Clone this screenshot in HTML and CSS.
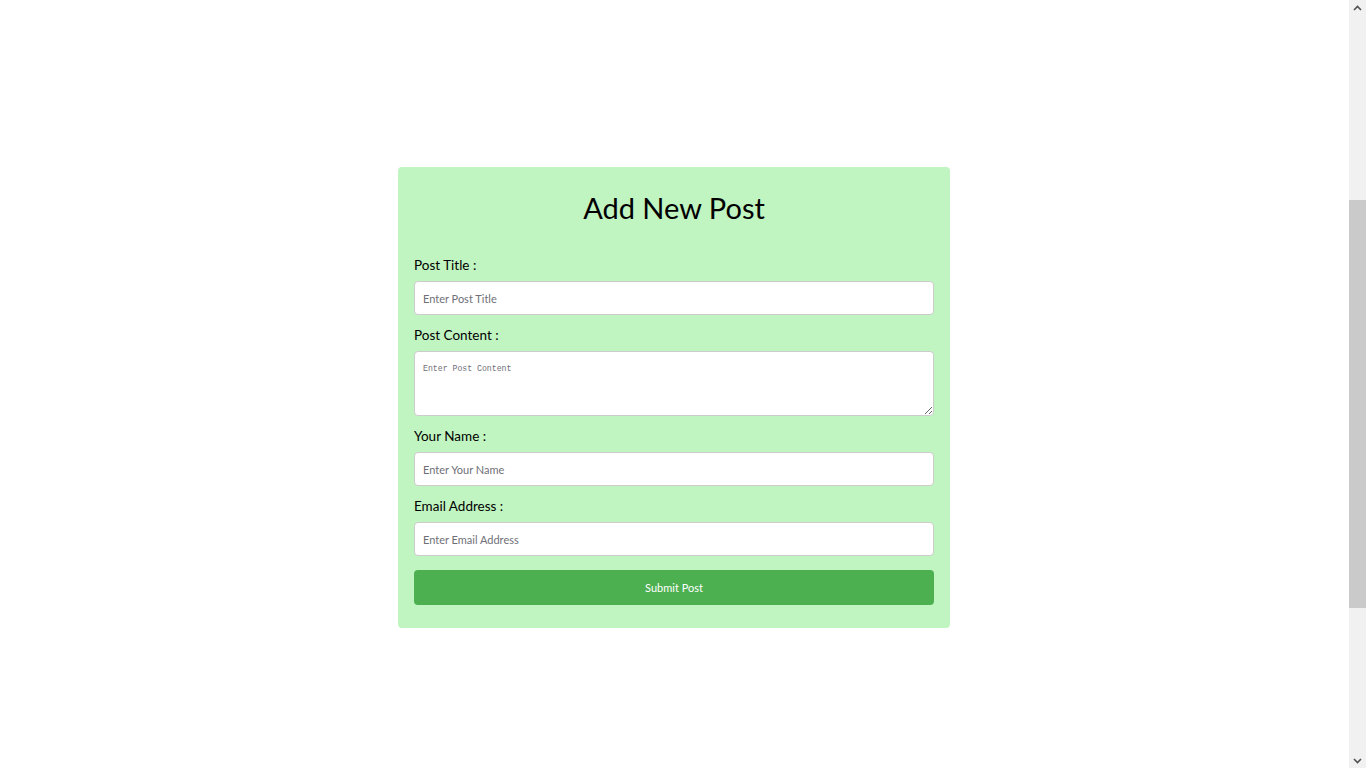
FILE: index.html
```html
<!DOCTYPE html>
<html lang="en">
<head>
<meta charset="utf-8">
<title>Add New Post</title>
<link rel="stylesheet" href="styles.css">
</head>
<body>
<main class="page">
  <form class="post-card">
    <h2 class="post-card__title">Add New Post</h2>
    <label class="field-label" for="title">Post Title :</label>
    <input class="field-input" id="title" type="text" placeholder="Enter Post Title">
    <label class="field-label" for="content">Post Content :</label>
    <textarea class="field-textarea" id="content" placeholder="Enter Post Content"></textarea>
    <label class="field-label" for="name">Your Name :</label>
    <input class="field-input" id="name" type="text" placeholder="Enter Your Name">
    <label class="field-label" for="email">Email Address :</label>
    <input class="field-input" id="email" type="email" placeholder="Enter Email Address">
    <button class="submit-btn" type="button">Submit Post</button>
  </form>
</main>
<div class="scrollbar" aria-hidden="true">
  <div class="scrollbar__btn">
    <svg width="9" height="6" viewBox="0 0 9 6"><path d="M1 5 L4.5 1.5 L8 5" fill="none" stroke="#505050" stroke-width="1.6"/></svg>
  </div>
  <div class="scrollbar__track"><div class="scrollbar__thumb"></div></div>
  <div class="scrollbar__btn">
    <svg width="9" height="6" viewBox="0 0 9 6"><path d="M1 1 L4.5 4.5 L8 1" fill="none" stroke="#505050" stroke-width="1.6"/></svg>
  </div>
</div>
<script src="app.js"></script>
</body>
</html>
```
FILE: styles.css
```css
html, body {
  margin: 0;
  padding: 0;
  background: #ffffff;
}
body {
  font-family: "Lato", "Open Sans", sans-serif;
  color: #000;
}
.page {
  display: flex;
  justify-content: center;
  padding: 515px 18px 413px 0;
}
.post-card {
  width: 520px;
  padding: 23px 16px 23px;
  background: #c0f4c0;
  border-radius: 4px;
  display: flex;
  flex-direction: column;
}
.post-card__title {
  margin: 0 0 29px;
  font-size: 29px;
  font-weight: 400;
  line-height: 36px;
  text-align: center;
}
.field-label {
  display: block;
  font-size: 13.5px;
  line-height: 20px;
  margin-bottom: 6px;
}
.field-input,
.field-textarea {
  box-sizing: border-box;
  width: 100%;
  border: 1px solid #cccccc;
  border-radius: 4px;
  background: #fff;
  margin: 0 0 10px;
  outline: none;
}
.field-input {
  height: 34px;
  padding: 0 8px;
  font-family: "Lato", "Open Sans", sans-serif;
  font-size: 11px;
}
.field-textarea {
  display: block;
  height: 65px;
  padding: 12px 8px 10px;
  font-family: "Liberation Mono", monospace;
  font-size: 8.2px;
  resize: vertical;
}
.field-input::placeholder,
.field-textarea::placeholder {
  color: #6f6f78;
}
.submit-btn {
  margin-top: 4px;
  height: 35px;
  border: none;
  border-radius: 4px;
  background: #4caf50;
  color: #fff;
  font-family: "Lato", "Open Sans", sans-serif;
  font-size: 11px;
  cursor: pointer;
}
.scrollbar {
  position: fixed;
  top: 0;
  right: 0;
  bottom: 0;
  width: 17px;
  background: #f1f1f1;
  display: flex;
  flex-direction: column;
}
.scrollbar__btn {
  height: 15px;
  display: flex;
  align-items: center;
  justify-content: center;
}
.scrollbar__track {
  flex: 1;
  padding-top: 185px;
}
.scrollbar__thumb {
  height: 408px;
  background: #cacaca;
}
```
FILE: app.js
```js
window.scrollTo(0, 348);
window.addEventListener('load', function () {
  window.scrollTo(0, 348);
});
```
